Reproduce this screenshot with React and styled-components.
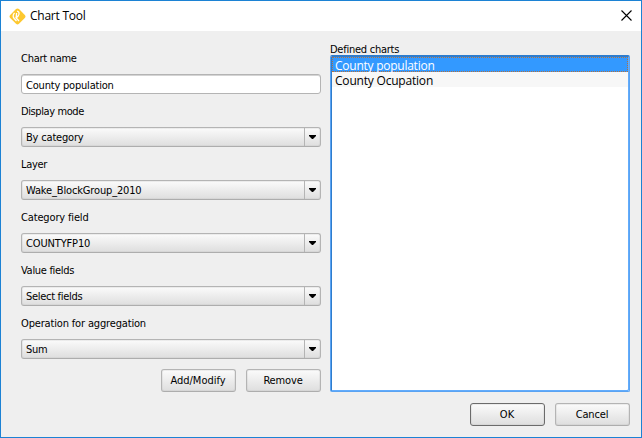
import React from "react";
import styled, { createGlobalStyle, css } from "styled-components";

const GlobalStyle = createGlobalStyle`
  * { box-sizing: border-box; }
  body { margin: 0; background: #efefef; }
`;

const Dialog = styled.div`
  width: 642px;
  height: 438px;
  border: 1px solid #1c82d4;
  background: #efefef;
  color: #000;
  font: 11px/14px "DejaVu Sans Condensed", "DejaVu Sans", sans-serif;
  font-stretch: condensed;
  display: flex;
  flex-direction: column;
  overflow: hidden;
`;

const TitleBar = styled.header`
  height: 30px;
  flex: none;
  background: #fff;
  display: flex;
  align-items: center;
  padding: 0 9px 0 8px;
`;

const Title = styled.h1`
  margin: 0 auto 0 4px;
  font: 12px/16px "Open Sans", "Noto Sans", sans-serif;
`;

const CloseButton = styled.button`
  width: 11px;
  height: 11px;
  padding: 0;
  border: 0;
  background: none;
  display: flex;
  margin-top: -2px;
`;

const Content = styled.main`
  display: flex;
  justify-content: space-between;
  padding: 0 11px 0 20px;
  height: 361px;
`;

const Form = styled.section`
  width: 300px;
  padding-top: 21px;
`;

const Field = styled.div`
  height: 53px;

  &:nth-last-child(2) {
    height: 52px;
  }
`;

const Label = styled.div`
  height: 14px;
  margin-bottom: 8px;
  white-space: nowrap;
`;

const Text = styled.span`
  display: inline-block;
  vertical-align: top;
  letter-spacing: ${(p) => p.$spacing || 0}px;
  white-space: nowrap;
`;

const raised = css`
  border: 1px solid #b4b4b4;
  border-bottom-color: #adadad;
  border-radius: 3px;
  background: linear-gradient(#fbfbfb, #dedede);
  box-shadow: inset 0 0 0 1px rgba(190, 190, 190, 0.25);
`;

const TextBox = styled.div`
  height: 20px;
  border: 1px solid #b4b4b4;
  border-radius: 3px;
  background: #fff;
  box-shadow: inset 0 1px 0 #d4d4d4;
  padding: 4px 4px 0;
`;

const Select = styled.div`
  ${raised}
  height: 20px;
  display: flex;
  justify-content: space-between;
  padding-left: 4px;
  line-height: 19px;
`;

const Arrow = styled.span`
  width: 16px;
  border-left: 1px solid #b4b4b4;
  display: flex;
  align-items: center;
  justify-content: center;
`;

const ButtonRow = styled.div`
  display: flex;
  justify-content: flex-end;
  gap: 10px;
  padding: ${(p) => p.$padding || "0"};
`;

const Button = styled.button`
  ${raised}
  width: 75px;
  height: 23px;
  padding: 0 1px 0 0;
  font: inherit;
  color: inherit;
  ${(p) => p.$primary && css`border-color: #6b6b6b;`}
`;

const Charts = styled.section`
  width: 300px;
  padding-top: 12px;
`;

const ChartsLabel = styled.div`
  height: 12px;
`;

const List = styled.div`
  height: 337px;
  border: 1px solid #5aa3f2;
  border-top-color: #2e7ccd;
  border-radius: 2px;
  background: #fff;
  box-shadow: inset 1px 1px 0 #2e7ccd, inset -1px -1px 0 #62acfc;
  padding: 1px;
`;

const ListItem = styled.div`
  height: 15px;
  padding: 2px 0 0 3px;
  font: 12px/13px "Open Sans", "Noto Sans", sans-serif;
  background: #f7f7f7;
  ${(p) => p.$selected && css`
    background: #3399ff;
    color: #fff;
    border: 1px dotted #b5703c;
    padding: 1px 0 0 2px;
  `}
`;

function Logo() {
  return (
    <svg width="17" height="17" viewBox="0 0 17 17">
      <path d="M7 1.1Q8.5-.3 10 1.1L15.8 7Q17.2 8.5 15.8 10L10 15.8Q8.5 17.2 7 15.8L1.2 10Q-.2 8.5 1.2 7Z" fill="#fdc82f" />
      <path d="M8 3.2Q10.4 3.5 10 6.2Q9.5 8.5 7 9.8L10 13M7.6 5L7.2 9.5M5.5 4.8Q3 8 5.2 10.5L7.5 13" fill="none" stroke="#fff" strokeWidth="1.3" />
    </svg>
  );
}

const FIELDS = [
  { label: "Display mode", value: "By category", labelSpacing: -0.4, valueSpacing: -0.18 },
  { label: "Layer", value: "Wake_BlockGroup_2010", labelSpacing: -0.3, valueSpacing: -0.15 },
  { label: "Category field", value: "COUNTYFP10", labelSpacing: -0.15, valueSpacing: -0.15 },
  { label: "Value fields", value: "Select fields", labelSpacing: -0.3, valueSpacing: -0.3 },
  { label: "Operation for aggregation", value: "Sum", labelSpacing: -0.16, valueSpacing: -0.3 },
];

export default function App() {
  return (
    <>
      <GlobalStyle />
      <Dialog>
        <TitleBar>
          <Logo />
          <Title><Text $spacing={-0.25}>Chart Tool</Text></Title>
          <CloseButton aria-label="Close">
            <svg width="11" height="11" viewBox="0 0 11 11">
              <path d="M.5 .5L10.5 10.5M10.5 .5L.5 10.5" stroke="#000" strokeWidth="1.1" />
            </svg>
          </CloseButton>
        </TitleBar>
        <Content>
          <Form>
            <Field>
              <Label><Text $spacing={-0.28}>Chart name</Text></Label>
              <TextBox><Text $spacing={-0.2}>County population</Text></TextBox>
            </Field>
            {FIELDS.map((f) => (
              <Field key={f.label}>
                <Label><Text $spacing={f.labelSpacing}>{f.label}</Text></Label>
                <Select>
                  <Text $spacing={f.valueSpacing}>{f.value}</Text>
                  <Arrow>
                    <svg width="7" height="4" viewBox="0 0 7 4"><path d="M0 0H7V1L4 4H3L0 1Z" /></svg>
                  </Arrow>
                </Select>
              </Field>
            ))}
            <ButtonRow>
              <Button><Text>Add/Modify</Text></Button>
              <Button><Text $spacing={-0.15}>Remove</Text></Button>
            </ButtonRow>
          </Form>
          <Charts>
            <ChartsLabel><Text $spacing={-0.25}>Defined charts</Text></ChartsLabel>
            <List>
              <ListItem $selected><Text $spacing={-0.25}>County population</Text></ListItem>
              <ListItem><Text $spacing={-0.2}>County Ocupation</Text></ListItem>
            </List>
          </Charts>
        </Content>
        <ButtonRow $padding="11px 11px 0">
          <Button $primary><Text>OK</Text></Button>
          <Button><Text $spacing={-0.15}>Cancel</Text></Button>
        </ButtonRow>
      </Dialog>
    </>
  );
}
